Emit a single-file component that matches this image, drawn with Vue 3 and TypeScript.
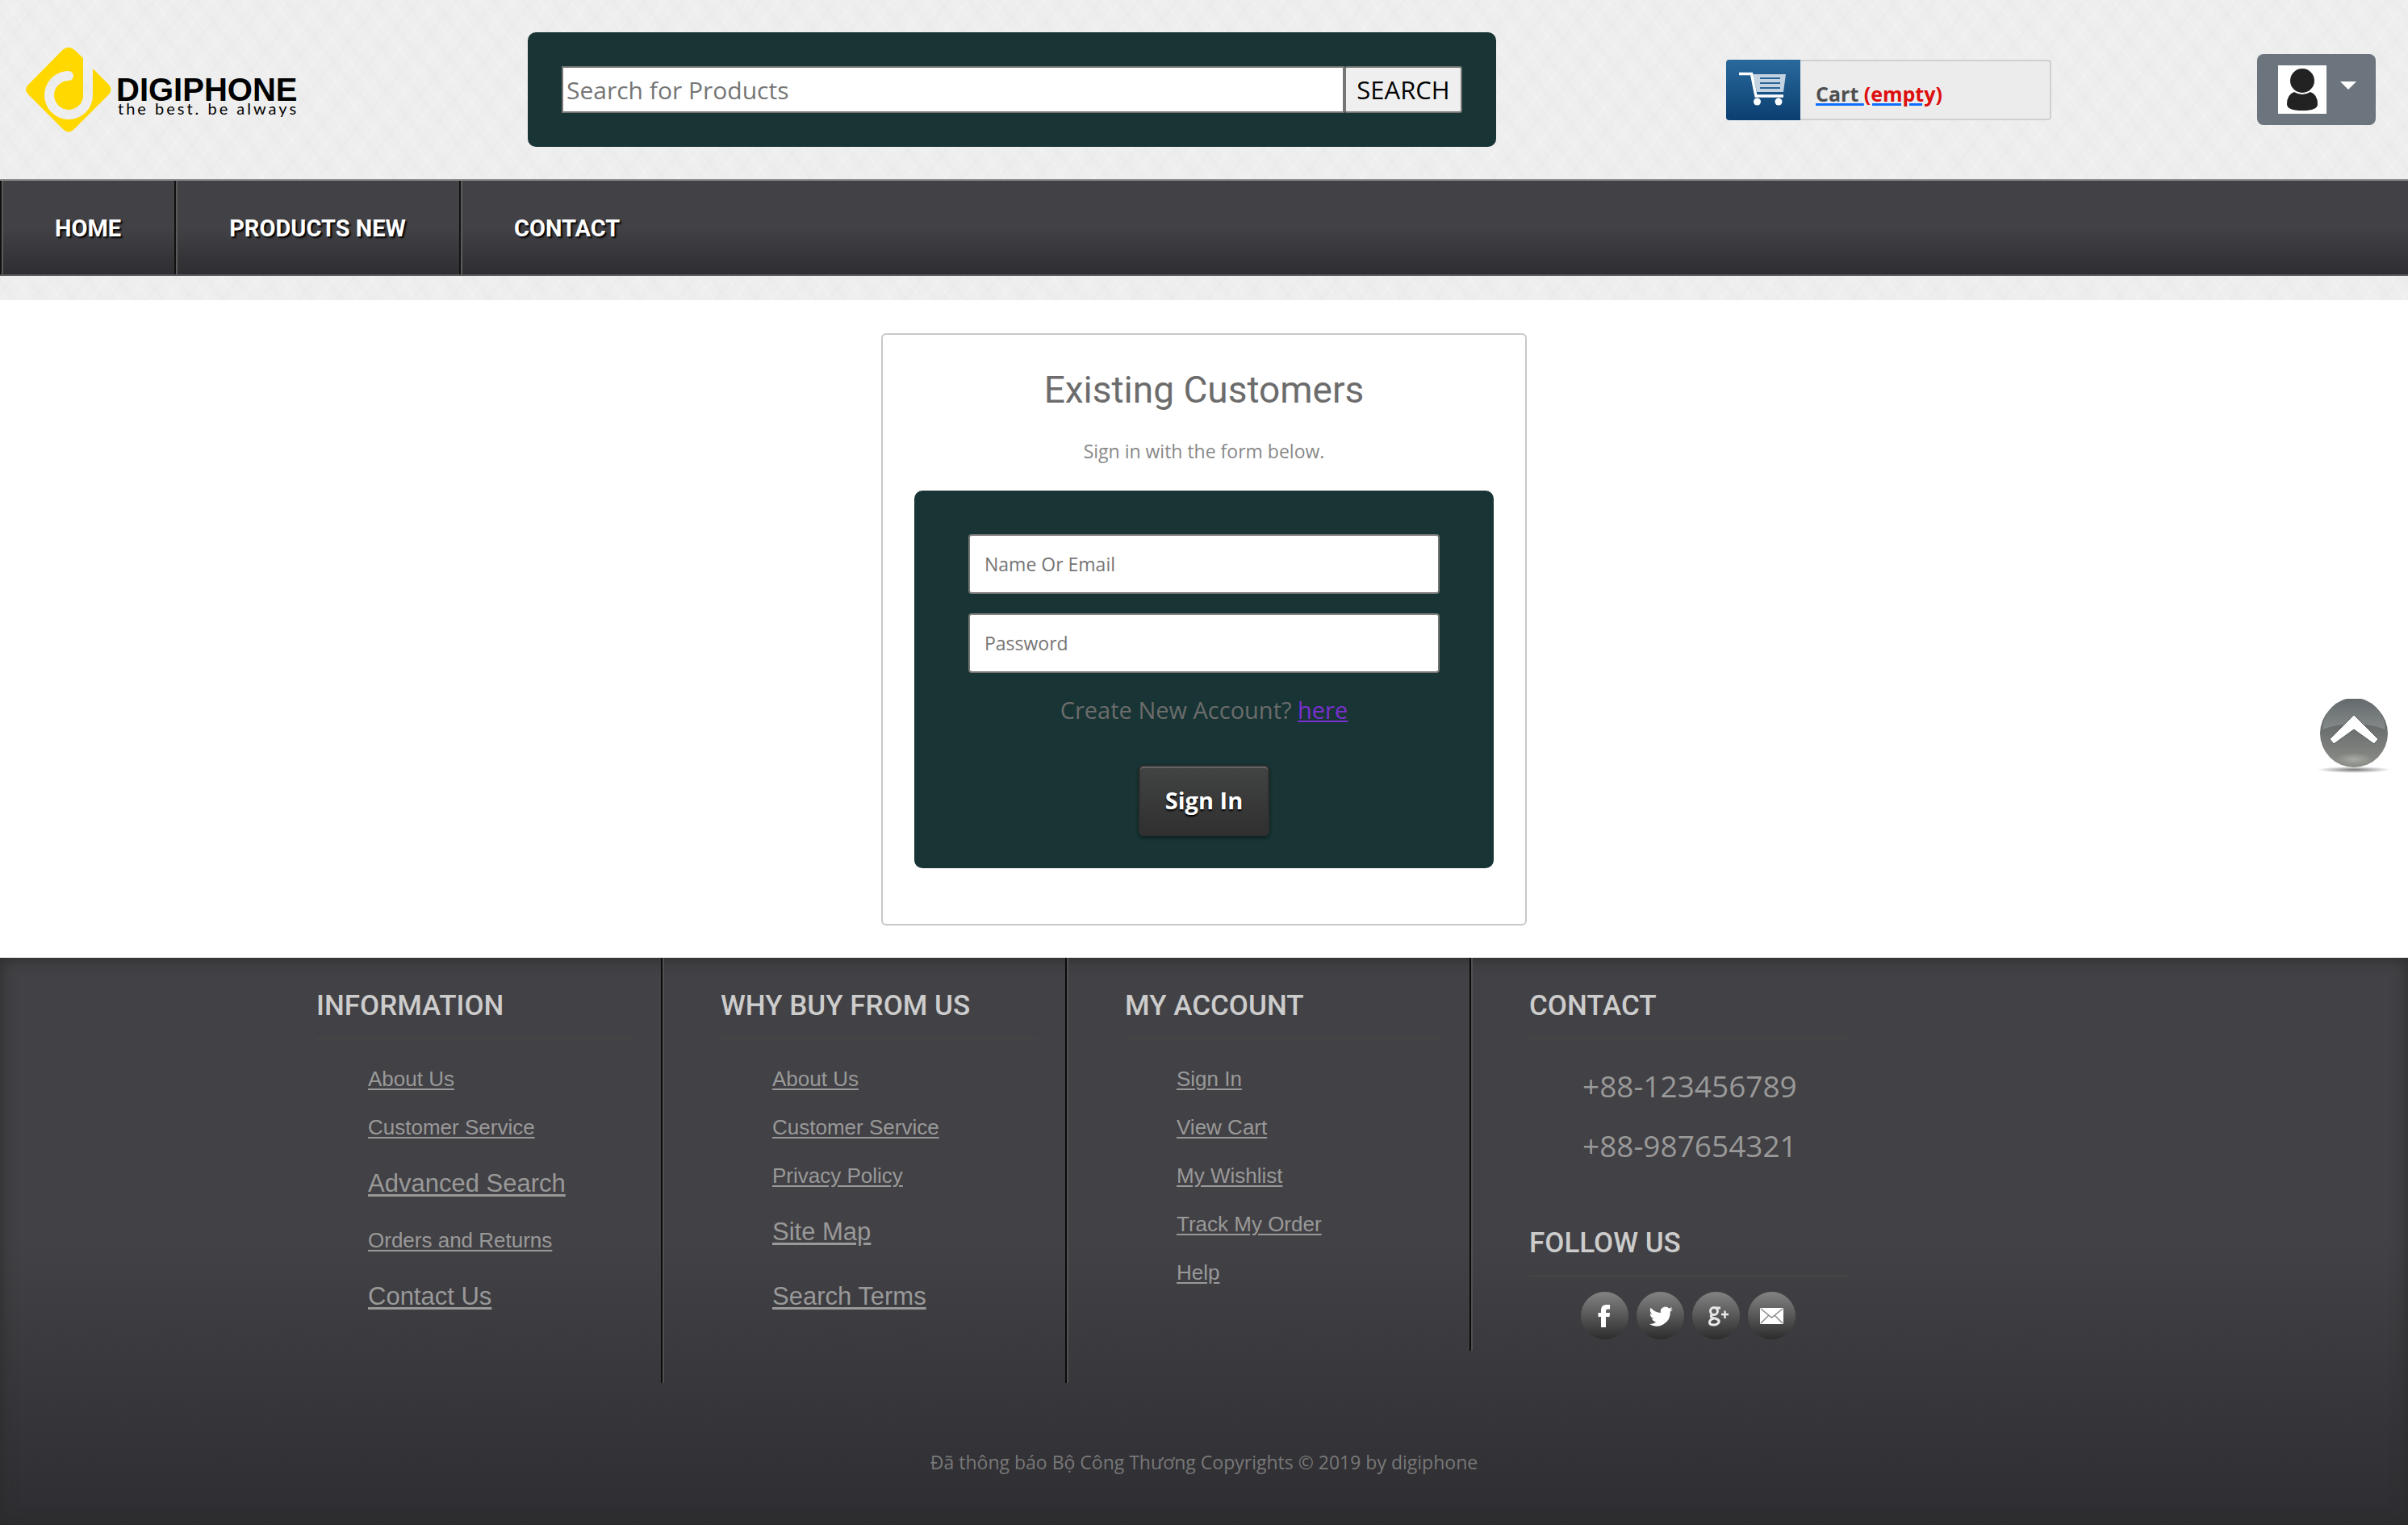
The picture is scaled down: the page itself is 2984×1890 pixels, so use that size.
<script setup lang="ts">
interface FooterLink {
  label: string
  large?: boolean
}
interface FooterColumn {
  title: string
  short?: boolean
  links: FooterLink[]
}

const navItems: string[] = ['HOME', 'PRODUCTS NEW', 'CONTACT']

const columns: FooterColumn[] = [
  {
    title: 'INFORMATION',
    links: [
      { label: 'About Us' },
      { label: 'Customer Service' },
      { label: 'Advanced Search', large: true },
      { label: 'Orders and Returns' },
      { label: 'Contact Us', large: true },
    ],
  },
  {
    title: 'WHY BUY FROM US',
    links: [
      { label: 'About Us' },
      { label: 'Customer Service' },
      { label: 'Privacy Policy' },
      { label: 'Site Map', large: true },
      { label: 'Search Terms', large: true },
    ],
  },
  {
    title: 'MY ACCOUNT',
    short: true,
    links: [
      { label: 'Sign In' },
      { label: 'View Cart' },
      { label: 'My Wishlist' },
      { label: 'Track My Order' },
      { label: 'Help' },
    ],
  },
]

const phones: string[] = ['+88-123456789', '+88-987654321']
</script>

<template>
  <div class="page">
    <div class="top">
      <header class="header">
        <a class="logo" href="#">
          <svg class="logo-mark" viewBox="0 0 106 106" aria-hidden="true">
            <path
              fill="#ffd800"
              d="M46 3.500Q53-2 60 3.500L71 14V62a18 18 0 1 1-18-20a6 6 0 0 0 0-12a30 30 0 1 0 30 30V27L103 47Q108 53 103 59L60 102Q53 109 46 102L3 59Q-3 53 3 47Z"
            />
          </svg>
          <span class="logo-words">
            <span class="logo-name">DIGIPHONE</span>
            <span class="logo-tag">the best. be always</span>
          </span>
        </a>

        <form class="search" @submit.prevent>
          <input class="search-input" type="text" placeholder="Search for Products" aria-label="Search for Products" />
          <button class="search-button" type="submit">SEARCH</button>
        </form>

        <div class="cart">
          <span class="cart-icon">
            <svg viewBox="0 0 92 75" aria-hidden="true">
              <path d="M33 18H74L71 40H38Z" fill="#c3d3e2" />
              <path d="M42 23H67M42 29H67M42 35H67" stroke="#2a6496" stroke-width="2" />
              <path d="M16 17.500H31.500L37 45H71" fill="none" stroke="#fff" stroke-width="3.500" />
              <circle cx="38.500" cy="52" r="4.500" fill="#fff" />
              <circle cx="65" cy="52" r="4.500" fill="#fff" />
            </svg>
          </span>
          <a class="cart-link" href="#">Cart <span class="cart-count">(empty)</span></a>
        </div>

        <button class="user" type="button" aria-label="Account menu">
          <svg class="avatar" viewBox="0 0 60 60" aria-hidden="true">
            <rect width="60" height="60" fill="#fff" />
            <path d="M20 33Q11 36 11 48Q11 56 30 56Q49 56 49 48Q49 36 40 33Q35 36 30 36Q25 36 20 33Z" fill="#222" />
            <ellipse cx="30" cy="19" rx="15" ry="15" fill="#222" />
          </svg>
          <svg class="caret" viewBox="0 0 20 10" aria-hidden="true"><path d="M0 0H20L10 10Z" fill="#fff" /></svg>
        </button>
      </header>

      <nav class="nav">
        <a v-for="item in navItems" :key="item" class="nav-link" href="#">{{ item }}</a>
      </nav>
    </div>

    <main class="main">
      <section class="card">
        <h1 class="card-title">Existing Customers</h1>
        <p class="card-text">Sign in with the form below.</p>
        <form class="login" @submit.prevent>
          <input class="field" type="text" placeholder="Name Or Email" aria-label="Name Or Email" />
          <input class="field" type="password" placeholder="Password" aria-label="Password" />
          <p class="create">Create New Account? <a class="create-link" href="#">here</a></p>
          <button class="signin" type="submit">Sign In</button>
        </form>
      </section>
    </main>

    <footer class="footer">
      <div class="columns">
        <section v-for="col in columns" :key="col.title" class="column" :class="{ short: col.short }">
          <h2 class="column-title">{{ col.title }}</h2>
          <ul class="links">
            <li v-for="link in col.links" :key="link.label" class="link-row" :class="{ large: link.large }">
              <a class="link" href="#">{{ link.label }}</a>
            </li>
          </ul>
        </section>
        <section class="column last">
          <h2 class="column-title">CONTACT</h2>
          <ul class="phones">
            <li v-for="phone in phones" :key="phone" class="phone">{{ phone }}</li>
          </ul>
          <h2 class="column-title follow">FOLLOW US</h2>
          <div class="social">
            <a class="social-link" href="#" aria-label="Facebook">
              <svg viewBox="0 0 59 59" aria-hidden="true">
                <path
                  fill="#fff"
                  d="M25 44V31H21.500V26H25V23Q25 16 31.500 16H36V21.500H33Q31 21.500 31 24V26H36L35.500 31H31V44Z"
                />
              </svg>
            </a>
            <a class="social-link" href="#" aria-label="Twitter">
              <svg viewBox="0 0 59 59" aria-hidden="true">
                <path
                  fill="#fff"
                  d="M45 21.500a12 12 0 0 1-3.500 1a6 6 0 0 0 2.600-3.400a12 12 0 0 1-3.800 1.500a6 6 0 0 0-10.300 5.500a17 17 0 0 1-12.400-6.300a6 6 0 0 0 1.900 8a6 6 0 0 1-2.700-.8a6 6 0 0 0 4.800 6a6 6 0 0 1-2.700.1a6 6 0 0 0 5.600 4.200a12 12 0 0 1-8.900 2.500a17 17 0 0 0 26.200-15.200a12 12 0 0 0 3.200-3.100Z"
                />
              </svg>
            </a>
            <a class="social-link" href="#" aria-label="Google Plus">
              <svg viewBox="0 0 59 59" aria-hidden="true">
                <g fill="none" stroke="#e8e8e8" stroke-width="3">
                  <ellipse cx="27" cy="24" rx="4.500" ry="4.500" />
                  <path d="M29 20H35M25 28Q21 31 26 32.500L30 33.500Q34 35 33 38Q31 41 27 41Q21 41 21.500 37.500Q22 34 27 33" />
                  <path d="M36 28H45M40.500 23.500V33" stroke-width="2.500" />
                </g>
              </svg>
            </a>
            <a class="social-link" href="#" aria-label="Email">
              <svg viewBox="0 0 59 59" aria-hidden="true">
                <rect x="15" y="20" width="29" height="20" rx="1" fill="#fff" />
                <path d="M16 21L29.500 32L43 21M16 39L26 29M43 39L33 29" fill="none" stroke="#8a8a8a" stroke-width="1.500" />
              </svg>
            </a>
          </div>
        </section>
      </div>
      <p class="copyright">Đã thông báo Bộ Công Thương Copyrights © 2019 by digiphone</p>
    </footer>

    <a class="to-top" href="#" aria-label="Back to top">
      <svg viewBox="0 0 96 96" aria-hidden="true">
        <defs>
          <linearGradient id="ball" x1="0" y1="0" x2="0" y2="1">
            <stop offset="0" stop-color="#4c5152" />
            <stop offset="0.450" stop-color="#6c706f" />
            <stop offset="1" stop-color="#8c8e88" />
          </linearGradient>
          <linearGradient id="gloss" x1="0" y1="0" x2="0" y2="1">
            <stop offset="0" stop-color="#63696b" />
            <stop offset="1" stop-color="#85898a" />
          </linearGradient>
          <radialGradient id="glow">
            <stop offset="0" stop-color="#a8aaa4" />
            <stop offset="1" stop-color="#a8aaa4" stop-opacity="0" />
          </radialGradient>
          <radialGradient id="shade">
            <stop offset="0" stop-color="#777" />
            <stop offset="1" stop-color="#777" stop-opacity="0" />
          </radialGradient>
        </defs>
        <ellipse cx="48" cy="88" rx="46" ry="4" fill="url(#shade)" />
        <circle cx="48" cy="43" r="42" fill="url(#ball)" />
        <path d="M9 38A39 39 0 0 1 87 38Q68 31 48 31Q28 31 9 38Z" fill="url(#gloss)" />
        <ellipse cx="48" cy="75" rx="24" ry="8" fill="url(#glow)" />
        <path d="M48 20L78 50L73 56L48 38L23 56L18 50Z" fill="#fff" stroke="#5a5f5f" stroke-width="1" />
      </svg>
    </a>
  </div>
</template>

<style>
body {
  margin: 0;
  background: #fff;
}
</style>

<style scoped>
* {
  box-sizing: border-box;
}
.page {
  display: flex;
  flex-direction: column;
  min-height: 100vh;
  font-family: 'Open Sans', 'Noto Sans', sans-serif;
  color: #6c6c6c;
}
.top {
  padding-bottom: 30px;
  background-color: #eee;
  background-image:
    repeating-linear-gradient(52deg, rgba(255, 255, 255, 0.12) 0 2px, transparent 4px 11px, rgba(0, 0, 0, 0.006) 13px 17px, transparent 19px 29px),
    repeating-linear-gradient(128deg, rgba(0, 0, 0, 0.006) 0 3px, transparent 6px 17px, rgba(255, 255, 255, 0.1) 20px 22px, transparent 25px 37px);
}
.header {
  display: flex;
  align-items: center;
  padding: 40px 40px 40px 32px;
}
.logo {
  display: flex;
  align-items: center;
  gap: 6px;
  width: 622px;
  color: #000;
  text-decoration: none;
}
.logo-mark {
  width: 106px;
  height: 106px;
}
.logo-words {
  display: flex;
  flex-direction: column;
  font-family: 'Liberation Sans', Arial, sans-serif;
  padding-top: 18px;
}
.logo-name {
  font-size: 40px;
  line-height: 28px;
  font-weight: 700;
}
.logo-tag {
  padding-left: 2px;
  font-family: Lato, sans-serif;
  font-size: 20px;
  line-height: 18px;
  letter-spacing: 3px;
}
.search {
  display: flex;
  width: 1200px;
  height: 142px;
  padding: 42px;
  border-radius: 10px;
  background: #183434;
}
.search-input {
  flex: 1;
  min-width: 0;
  padding: 2px 4px;
  border: 2px solid #767676;
  background: #fff;
  font-family: inherit;
  font-size: 30px;
  color: #000;
}
.search-input::placeholder,
.field::placeholder {
  color: #757575;
  opacity: 1;
}
.search-button {
  width: 146px;
  padding: 0;
  border: 2px solid #767676;
  border-radius: 3px;
  background: #efefef;
  font-family: inherit;
  font-size: 31px;
  color: #000;
}
.cart {
  display: flex;
  width: 403px;
  height: 75px;
  margin-left: 285px;
  border: 2px solid #d0d0d0;
  border-left: 0;
  border-radius: 4px;
  background: #ececec;
}
.cart-icon {
  width: 92px;
  height: 75px;
  margin-top: -2px;
  border-radius: 4px 0 0 4px;
  background: linear-gradient(#2a699c, #0a3f70);
}
.cart-icon svg {
  display: block;
}
.cart-link {
  padding: 24px 0 0 19px;
  font-size: 25px;
  line-height: 32px;
  font-weight: 700;
  color: #4f4f4f;
  text-decoration: underline #0d6efd 3px;
}
.cart-count {
  color: #dd0f0e;
}
.user {
  display: flex;
  gap: 17px;
  margin-left: auto;
  height: 88px;
  width: 147px;
  padding: 14px 24px 14px 26px;
  border: 0;
  border-radius: 8px;
  background: #6c757d;
}
.avatar {
  flex: none;
  width: 60px;
  height: 60px;
}
.caret {
  flex: none;
  width: 20px;
  height: 10px;
  margin-top: 20px;
}
.nav {
  display: flex;
  height: 120px;
  border-top: 2px solid #8a8a8a;
  border-bottom: 2px solid #5c5c5e;
  background: linear-gradient(#424145 50%, #2e2d31);
}
.nav-link {
  display: flex;
  align-items: center;
  padding: 2px 66px 0;
  border-left: 2px solid #111;
  box-shadow: inset 2px 0 0 #5a5a5a;
  font-family: Roboto, sans-serif;
  font-size: 29px;
  font-weight: 700;
  color: #fff;
  text-decoration: none;
  text-shadow: 2px 2px 2px #000;
}
.main {
  display: flex;
  justify-content: center;
  padding: 41px 0 40px;
}
.card {
  width: 800px;
  height: 734px;
  padding: 39px;
  border: 2px solid #c8c8c8;
  border-radius: 6px;
  text-align: center;
}
.card-title {
  margin: 0;
  font-family: Roboto, sans-serif;
  font-size: 46px;
  line-height: 58px;
  font-weight: 400;
  color: #6c6c6c;
}
.card-text {
  margin: 32px 0 34px;
  font-size: 23px;
  line-height: 30px;
  color: #888;
}
.login {
  display: flex;
  flex-direction: column;
  align-items: center;
  padding: 54px 67px 40px;
  border-radius: 10px;
  background: #183434;
}
.field {
  width: 100%;
  height: 74px;
  margin-bottom: 24px;
  padding: 0 18px;
  border: 2px solid #767676;
  border-radius: 4px;
  background: #fff;
  font-family: inherit;
  font-size: 23px;
  color: #000;
}
.create {
  margin: 0 0 46px;
  font-size: 29px;
  line-height: 44px;
}
.create-link {
  color: #7a2fd0;
}
.signin {
  width: 162px;
  height: 88px;
  padding: 0 0 2px;
  border: 2px solid #2f2f2f;
  border-radius: 6px;
  background: linear-gradient(#424343, #303030);
  box-shadow: inset 0 2px 0 #666, 0 2px 4px rgba(0, 0, 0, 0.5);
  font-family: inherit;
  font-size: 29px;
  font-weight: 700;
  color: #fff;
  text-shadow: 0 2px 2px #000;
}
.footer {
  flex: 1;
  background: linear-gradient(#424145 50%, #2e2d31);
  box-shadow: inset 0 0 20px #2a2a2a;
}
.columns {
  display: flex;
  align-items: flex-start;
  height: 527px;
  width: 2344px;
  max-width: 100%;
  margin: 0 auto;
}
.column {
  width: 501px;
  height: 527px;
  padding: 34px 35px 0 72px;
  border-right: 2px solid #0a0a0a;
  box-shadow: 2px 0 0 #505050;
}
.column.short {
  height: 487px;
}
.column.last {
  border-right: 0;
  box-shadow: none;
}
.column-title {
  margin: 0;
  padding-bottom: 13px;
  border-bottom: 2px solid #464646;
  font-family: Roboto, sans-serif;
  font-size: 35px;
  line-height: 52px;
  font-weight: 500;
  color: #ccc;
}
.links,
.phones {
  margin: 0;
  padding: 0;
  list-style: none;
}
.links {
  padding: 19px 0 0 64px;
  font-family: 'Liberation Sans', Arial, sans-serif;
}
.link-row {
  height: 60px;
  font-size: 26px;
  line-height: 60px;
}
.link-row.large {
  height: 80px;
  font-size: 31px;
  line-height: 80px;
}
.link {
  color: #999;
  text-underline-offset: 3px;
}
.phones {
  padding: 21px 0 0 66px;
}
.phone {
  font-size: 37px;
  line-height: 74px;
  color: #999;
}
.follow {
  margin-top: 58px;
}
.social {
  display: flex;
  gap: 10px;
  padding: 19px 0 0 64px;
}
.social-link {
  width: 59px;
  height: 59px;
  border-radius: 50%;
  background: linear-gradient(#838383, #2c2c2c);
}
.social-link svg {
  display: block;
}
.copyright {
  margin: 80px 0 0;
  font-size: 23px;
  line-height: 36px;
  text-align: center;
  color: #787878;
}
.to-top {
  position: fixed;
  right: 19px;
  bottom: 928px;
  width: 96px;
  height: 96px;
}
</style>
